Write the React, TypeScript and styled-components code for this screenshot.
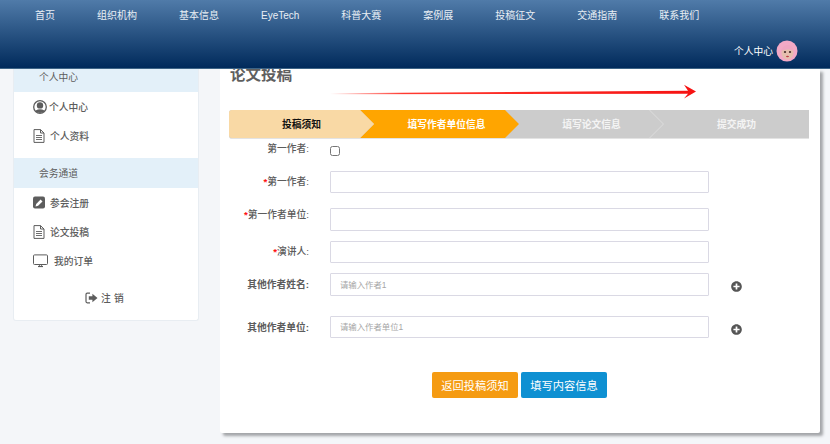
import React from "react";
import styled, { createGlobalStyle } from "styled-components";
import { FaPlusCircle } from "react-icons/fa";

const Global = createGlobalStyle`
  html, body { margin: 0; padding: 0; background: #f4f6f9; }
  body { width: 830px; height: 444px; overflow: hidden; font-family: "Liberation Sans", "Noto Sans CJK SC", sans-serif; }
  * { box-sizing: border-box; }
`;

const Page = styled.div`
  width: 830px;
  height: 444px;
  display: flex;
  flex-direction: column;
`;
const Header = styled.header`
  height: 69px;
  flex: none;
  position: relative;
  z-index: 2;
  background: linear-gradient(#507ba9, #002a5b);
  border-bottom: 1px solid #3d6486;
  display: flex;
  flex-direction: column;
  color: #fff;
`;
const Nav = styled.nav`
  display: flex;
  gap: 42px;
  padding: 9px 0 0 35px;
  font-size: 10px;
  line-height: 13px;
  color: #e9eff5;
`;
const UserBox = styled.div`
  display: flex;
  align-items: center;
  justify-content: flex-end;
  gap: 3px;
  margin-top: 18px;
  padding-right: 32px;
  font-size: 9.75px;
`;
const Body = styled.div`
  display: flex;
  align-items: flex-start;
  padding-left: 13px;
`;
const Side = styled.aside`
  width: 186px;
  height: 252px;
  background: #fff;
  border: 1px solid #e8edf2;
  border-top: 0;
  border-radius: 0 0 3px 3px;
  color: #5c5c5c;
  font-size: 9.75px;
`;
const SideHead = styled.div<{ $h: number; $gap?: number; $up?: number }>`
  height: ${(p) => p.$h}px;
  margin-top: ${(p) => p.$gap ?? 0}px;
  padding: 0 0 ${(p) => p.$up ?? 0}px 25px;
  background: #e3f0f9;
  display: flex;
  align-items: center;
`;
const SideItem = styled.div<{ $gap: number }>`
  height: 29px;
  display: flex;
  align-items: center;
  gap: ${(p) => p.$gap}px;
  padding-left: 19px;
  font-weight: 500;
  & svg { flex: none; }
`;
const Logout = styled.div`
  display: flex;
  align-items: center;
  justify-content: center;
  gap: 3px;
  margin-top: 8px;
  height: 29px;
  font-weight: 500;
  padding-right: 3px;
  letter-spacing: 0.2px;
`;
const Main = styled.main`
  width: 600px;
  height: 364px;
  margin-left: 21px;
  padding: 0 11px 0 9px;
  background: #fff;
  border-radius: 0 0 2px 2px;
  box-shadow: 3px 3px 3px #a3a5a8;
  overflow: hidden;
`;
const Title = styled.h1`
  margin: -3px 0 0 1px;
  font-size: 15.5px;
  line-height: 18px;
  font-weight: 700;
  color: #5f5f5f;
`;
const ArrowSlot = styled.div`
  height: 21px;
  margin-left: 101px;
  & svg { display: block; }
`;
const Steps = styled.div`
  display: flex;
  height: 29px;
  margin-top: 5px;
  background: #ccc;
  border-bottom: 1px solid #e3e3e3;
  border-radius: 3px 0 0 3px;
`;
const Step = styled.div<{ $bg: string; $fg: string; $z: number; $line?: boolean; $notch?: boolean }>`
  position: relative;
  z-index: ${(p) => p.$z};
  flex: 0 0 145px;
  display: flex;
  align-items: center;
  justify-content: center;
  font-size: 9.75px;
  font-weight: 700;
  color: ${(p) => p.$fg};
  & > span { position: relative; }
  &::before {
    content: "";
    position: absolute;
    top: 0;
    bottom: 0;
    left: ${(p) => (p.$notch ? "-14px" : "0")};
    right: 0;
    background: ${(p) => p.$bg};
    border-radius: ${(p) => (p.$notch ? "0" : "3px 0 0 3px")};
    clip-path: ${(p) =>
      p.$notch
        ? "polygon(0 0, calc(100% - 14px) 0, 100% 50%, calc(100% - 14px) 100%, 0 100%, 14px 50%)"
        : "polygon(0 0, calc(100% - 14px) 0, 100% 50%, calc(100% - 14px) 100%, 0 100%)"};
  }
  &::after {
    content: "";
    display: ${(p) => (p.$line ? "block" : "none")};
    position: absolute;
    top: 0;
    bottom: 0;
    right: 0;
    width: 15px;
    background: #dcdcdc;
    clip-path: polygon(0 0, 1px 0, 100% 50%, 1px 100%, 0 100%, calc(100% - 1px) 50%);
  }
`;
const Row = styled.div<{ $gap: number; $h: number }>`
  display: flex;
  align-items: flex-start;
  margin-top: ${(p) => p.$gap}px;
  height: ${(p) => p.$h}px;
  color: #5c5c5c;
`;
const Label = styled.label<{ $strong?: boolean; $top: number }>`
  flex: 0 0 80px;
  margin-right: 21px;
  margin-top: ${(p) => p.$top}px;
  text-align: right;
  font-size: 9.75px;
  line-height: 13px;
  font-weight: ${(p) => (p.$strong ? 700 : 500)};
  white-space: nowrap;
`;
const Star = styled.i`
  color: #ff1010;
  font-style: normal;
  font-weight: 700;
`;
const Check = styled.input`
  width: 10px;
  height: 10px;
  margin: 5px 0 0;
  accent-color: #666;
`;
const Field = styled.input`
  width: 379px;
  height: 100%;
  padding: 0 9px;
  background: #fff;
  border: 1px solid #dad9e4;
  border-radius: 1px;
  outline: none;
  font-family: inherit;
  font-size: 8.4px;
  &::placeholder { color: #a6a6a6; }
`;
const AddButton = styled.span`
  display: inline-flex;
  margin: 8px 0 0 22px;
  color: #555;
`;
const Actions = styled.div`
  display: flex;
  justify-content: center;
  gap: 3px;
  margin-top: 34px;
  padding-left: 1px;
`;
const Btn = styled.button<{ $bg: string }>`
  width: 86px;
  height: 26px;
  padding: 0;
  border: 0;
  border-radius: 2px;
  background: ${(p) => p.$bg};
  color: #fff;
  font-family: inherit;
  font-size: 11.25px;
`;

const Avatar = () => (
  <svg width="22" height="22" viewBox="0 0 22 22">
    <circle cx="11" cy="11" r="10.500" fill="#f3a9c6" />
    <ellipse cx="11.500" cy="12.500" rx="6" ry="7" fill="#e6bfae" />
    <path d="M5 11c1-4 4-6 7-6s5 2 5.500 6c-3-2-8-2-12.500 0z" fill="#f0a6c2" />
    <ellipse cx="9" cy="12" rx="1.200" ry=".9" fill="#4d3230" />
    <ellipse cx="14" cy="12" rx="1.200" ry=".9" fill="#4d3230" />
    <ellipse cx="11.500" cy="16.500" rx="1.500" ry=".8" fill="#bc3f48" />
  </svg>
);
const UserIcon = () => (
  <svg width="14" height="14" viewBox="0 0 14 14">
    <defs>
      <clipPath id="uc"><circle cx="7" cy="7" r="6" /></clipPath>
    </defs>
    <circle cx="7" cy="7" r="6.300" fill="none" stroke="#5d5d5d" strokeWidth="1.300" />
    <g clipPath="url(#uc)" fill="#5d5d5d">
      <circle cx="7" cy="5.400" r="3.200" />
      <ellipse cx="7" cy="13" rx="5.500" ry="3.800" />
    </g>
  </svg>
);
const FileIcon = () => (
  <svg width="12" height="14" viewBox="0 0 12 14" fill="none" stroke="#5d5d5d">
    <path d="M1 .6h6.500L11 4v9.400H1z" />
    <path d="M7.500.6V4H11" />
    <path d="M3 6.500h6M3 8.500h6M3 10.500h6" strokeWidth=".9" />
  </svg>
);
const PenSquareIcon = () => (
  <svg width="12" height="13" viewBox="0 0 12 13">
    <rect y=".5" width="12" height="12" rx="2" fill="#5d5d5d" />
    <path d="M2.500 10.500l.7-2.600 4.400-4.400 1.900 1.900-4.400 4.400z" fill="#fff" />
  </svg>
);
const MonitorIcon = () => (
  <svg width="15" height="14" viewBox="0 0 15 14" fill="none" stroke="#5d5d5d">
    <rect x=".5" y=".9" width="14" height="9.600" rx="1" />
    <path d="M5 12.500h5" strokeWidth="1.200" />
    <path d="M6.500 10.500v2M8.500 10.500v2" strokeWidth=".8" />
  </svg>
);
const SignOutIcon = () => (
  <svg width="13" height="12" viewBox="0 0 13 12">
    <path d="M5 1.200H2.200C1.500 1.200 1 1.700 1 2.400v7.200c0 .7.5 1.200 1.200 1.200H5" fill="none" stroke="#5d5d5d" strokeWidth="1.200" />
    <path d="M3.800 4.200h3.600V1.800L12.500 6l-5.100 4.200V7.800H3.800z" fill="#5d5d5d" />
  </svg>
);
const RedArrow = () => (
  <svg width="366" height="16" viewBox="0 0 366 16">
    <defs>
      <linearGradient id="ra" x1="0" x2="1" y1="0" y2="0">
        <stop offset="0" stopColor="#ff2a20" stopOpacity="0" />
        <stop offset=".2" stopColor="#ff3a30" />
        <stop offset="1" stopColor="#f61212" />
      </linearGradient>
    </defs>
    <path d="M0 9.200L358 6.800 354 .8 366 7.500 354 14.600 358 9.700 0 10.200z" fill="url(#ra)" />
  </svg>
);

export default function App() {
  return (
    <Page>
      <Global />
      <Header>
        <Nav>
          <span>首页</span>
          <span>组织机构</span>
          <span>基本信息</span>
          <span>EyeTech</span>
          <span>科普大赛</span>
          <span>案例展</span>
          <span>投稿征文</span>
          <span>交通指南</span>
          <span>联系我们</span>
        </Nav>
        <UserBox>
          <span>个人中心</span>
          <Avatar />
        </UserBox>
      </Header>
      <Body>
        <Side>
          <SideHead $h={23} $up={8}>个人中心</SideHead>
          <SideItem $gap={2}><UserIcon />个人中心</SideItem>
          <SideItem $gap={5}><FileIcon />个人资料</SideItem>
          <SideHead $h={30} $gap={8}>会务通道</SideHead>
          <SideItem $gap={5}><PenSquareIcon />参会注册</SideItem>
          <SideItem $gap={5}><FileIcon />论文投稿</SideItem>
          <SideItem $gap={6}><MonitorIcon />我的订单</SideItem>
          <Logout><SignOutIcon />注 销</Logout>
        </Side>
        <Main>
          <Title>论文投稿</Title>
          <ArrowSlot>
            <RedArrow />
          </ArrowSlot>
          <Steps>
            <Step $bg="#f9d9a5" $fg="#111" $z={4}><span>投稿须知</span></Step>
            <Step $bg="#ffa500" $fg="#fff" $z={3} $notch><span>填写作者单位信息</span></Step>
            <Step $bg="#cccccc" $fg="#f4f4f4" $z={2} $line $notch><span>填写论文信息</span></Step>
            <Step $bg="#cccccc" $fg="#f4f4f4" $z={1} $notch><span>提交成功</span></Step>
          </Steps>
          <Row $gap={2} $h={17}>
            <Label $top={1}>第一作者:</Label>
            <Check type="checkbox" />
          </Row>
          <Row $gap={13} $h={22}>
            <Label $top={4}><Star>*</Star>第一作者:</Label>
            <Field />
          </Row>
          <Row $gap={15} $h={23}>
            <Label $top={0}><Star>*</Star>第一作者单位:</Label>
            <Field />
          </Row>
          <Row $gap={10} $h={22}>
            <Label $top={4}><Star>*</Star>演讲人:</Label>
            <Field />
          </Row>
          <Row $gap={10} $h={23}>
            <Label $strong $top={5}>其他作者姓名:</Label>
            <Field placeholder="请输入作者1" />
            <AddButton><FaPlusCircle size={11} /></AddButton>
          </Row>
          <Row $gap={20} $h={22}>
            <Label $strong $top={5}>其他作者单位:</Label>
            <Field placeholder="请输入作者单位1" />
            <AddButton><FaPlusCircle size={11} /></AddButton>
          </Row>
          <Actions>
            <Btn $bg="#f59b12">返回投稿须知</Btn>
            <Btn $bg="#0e90d2">填写内容信息</Btn>
          </Actions>
        </Main>
      </Body>
    </Page>
  );
}
